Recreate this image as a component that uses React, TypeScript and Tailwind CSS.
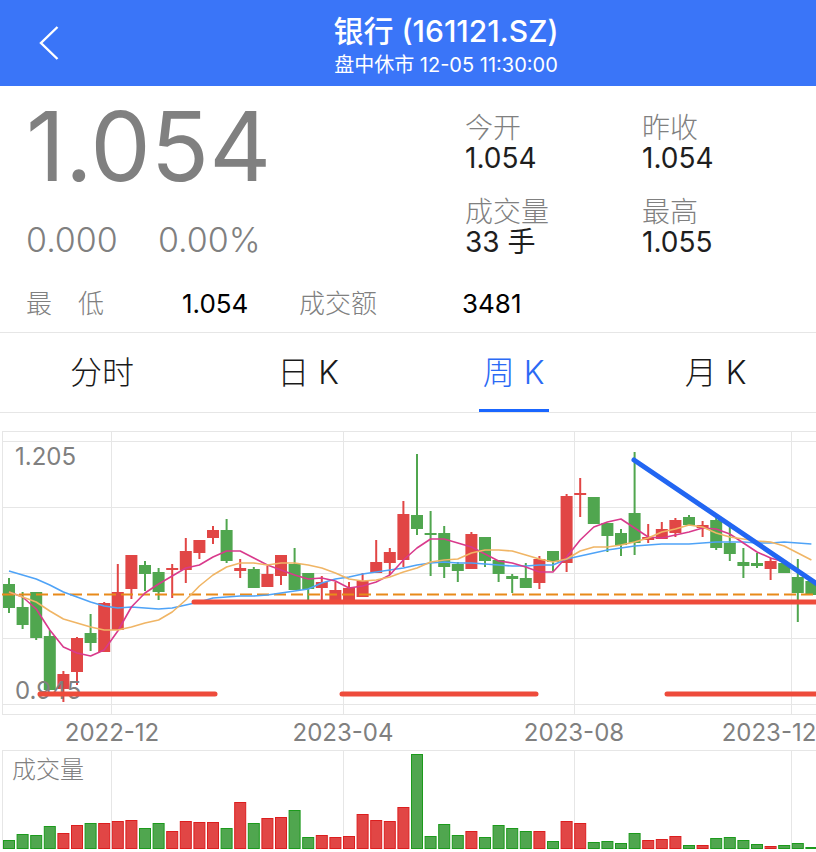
type Candle = {
  up: boolean;
  top: number;
  bottom: number;
  high: number;
  low: number;
  volume: number;
};

const RED = "#e14645";
const GREEN = "#50a64f";
const GRID = "#e6e6e6";
const FIRST_X = 9;
const STEP = 13.6;

// up(1)/down(0), body top, body bottom, high, low, volume
const rows: number[][] = [
  [0, 584, 608, 578, 613, 9],
  [0, 607, 625, 592, 629, 15],
  [0, 592, 638, 592, 640, 14],
  [0, 636, 690, 630, 690, 23],
  [1, 674, 689, 671, 702, 16],
  [1, 638, 672, 637, 685, 24],
  [0, 633, 643, 614, 651, 26],
  [1, 603, 652, 602, 652, 26],
  [1, 592, 630, 564, 630, 28],
  [1, 555, 589, 555, 599, 29],
  [0, 565, 574, 561, 591, 21],
  [0, 572, 592, 568, 600, 26],
  [1, 568, 570, 564, 598, 18],
  [1, 551, 570, 538, 583, 28],
  [1, 540, 553, 540, 559, 27],
  [1, 530, 538, 526, 544, 27],
  [0, 530, 561, 519, 563, 21],
  [1, 568, 571, 559, 578, 47],
  [0, 569, 588, 567, 588, 26],
  [1, 574, 587, 566, 587, 31],
  [1, 555, 576, 555, 585, 32],
  [0, 564, 590, 548, 590, 39],
  [0, 573, 589, 573, 600, 12],
  [1, 582, 588, 576, 600, 14],
  [1, 590, 600, 582, 600, 12],
  [1, 588, 601, 582, 601, 13],
  [1, 581, 597, 573, 597, 35],
  [1, 562, 573, 540, 573, 29],
  [1, 552, 563, 548, 575, 28],
  [1, 514, 560, 501, 567, 42],
  [0, 515, 529, 454, 535, 95],
  [0, 533, 535, 511, 576, 13],
  [0, 533, 567, 526, 578, 25],
  [0, 564, 571, 562, 582, 14],
  [1, 534, 569, 532, 569, 18],
  [0, 537, 561, 537, 567, 12],
  [0, 560, 574, 560, 582, 24],
  [0, 576, 579, 574, 593, 21],
  [0, 578, 588, 563, 588, 18],
  [1, 559, 583, 556, 589, 18],
  [0, 551, 562, 551, 571, 8],
  [1, 496, 563, 494, 572, 28],
  [1, 493, 495, 478, 517, 26],
  [0, 497, 524, 497, 524, 7],
  [0, 523, 536, 523, 552, 8],
  [0, 533, 545, 529, 556, 6],
  [0, 513, 543, 452, 555, 16],
  [1, 537, 540, 524, 543, 9],
  [1, 529, 539, 522, 539, 10],
  [1, 520, 533, 518, 537, 13],
  [0, 517, 525, 515, 525, 4],
  [1, 525, 528, 521, 537, 4],
  [0, 520, 548, 517, 550, 11],
  [0, 543, 554, 527, 561, 12],
  [0, 562, 566, 548, 578, 9],
  [0, 563, 566, 553, 568, 5],
  [1, 561, 569, 558, 580, 3],
  [0, 563, 573, 563, 573, 4],
  [0, 577, 593, 559, 622, 6],
  [0, 581, 595, 581, 595, 2],
];

const candles: Candle[] = rows.map(([up, top, bottom, high, low, volume]) => ({
  up: up === 1,
  top,
  bottom,
  high,
  low,
  volume,
}));

const ma5 = [
  592, 597, 609, 630, 647, 653, 656, 650, 631, 607, 593, 584, 576, 568, 565,
  557, 551, 551, 558, 565, 570, 575, 579, 578, 581, 588, 586, 582, 575, 560,
  548, 539, 539, 543, 547, 554, 561, 563, 567, 572, 572, 557, 540, 527, 522,
  519, 528, 537, 538, 535, 532, 528, 529, 534, 543, 552, 558, 562, 571, 580,
];

const ma10 = [
  592, 597, 602, 611, 619, 623, 627, 630, 630, 627, 623, 620, 612, 600, 586,
  575, 567, 563, 563, 565, 563, 563, 565, 568, 573, 579, 581, 580, 577, 572,
  568, 562, 560, 559, 553, 550, 550, 551, 555, 559, 562, 559, 551, 547, 547,
  545, 542, 538, 532, 529, 525, 527, 533, 537, 539, 541, 542, 546, 553, 560,
];

const ma20 = [
  571, 575, 579, 585, 592, 597, 602, 606, 608, 607, 608, 609, 608, 605, 602,
  598, 597, 596, 596, 595, 593, 591, 589, 583, 579, 577, 574, 572, 570, 568,
  565, 563, 562, 563, 563, 564, 565, 566, 566, 565, 565, 559, 556, 553, 550,
  548, 546, 545, 544, 544, 544, 543, 542, 542, 542, 543, 543, 542, 543, 544,
];

const months = [
  { label: "2022-12", x: 112 },
  { label: "2023-04", x: 343 },
  { label: "2023-08", x: 574 },
  { label: "2023-12", x: 769 },
];

const tabs = ["分时", "日 K", "周 K", "月 K"];

const quotes = [
  { label: "今开", value: "1.054" },
  { label: "昨收", value: "1.054" },
  { label: "成交量", value: "33 手" },
  { label: "最高", value: "1.055" },
];

const xAt = (i: number) => FIRST_X + i * STEP;

const toPoints = (values: number[]) =>
  values.map((y, i) => `${xAt(i).toFixed(1)},${y}`).join(" ");

const Header = () => (
  <header className="flex h-[86px] items-center bg-[#3a75f8] text-white">
    <button type="button" aria-label="返回" className="w-[76px] py-6 pl-[38px]">
      <svg width="22" height="36" viewBox="0 0 22 36" fill="none">
        <path d="M19.5 2 3 18l16.500 16" stroke="white" strokeWidth="2.4" />
      </svg>
    </button>
    <div className="flex-1 pt-2 text-center">
      <h1 className="text-[30px] leading-9 font-medium">银行 (161121.SZ)</h1>
      <p className="text-[20px] leading-8">盘中休市 12-05 11:30:00</p>
    </div>
  </header>
);

const Quote = () => (
  <section className="border-b border-[#e6e6e6] pt-4 pb-2 pl-[26px] text-[#808080]">
    <div className="grid grid-cols-[439fr_351fr]">
      <div>
        <p className="text-[96px] leading-[88px]">1.054</p>
        <p className="flex gap-10 pt-[30px] text-[34px] leading-[40px] font-light">
          <span>0.000</span>
          <span>0.00%</span>
        </p>
      </div>
      <dl className="grid grid-cols-[177fr_174fr] content-start gap-y-6 pt-[11px]">
        {quotes.map((item) => (
          <div key={item.label}>
            <dt className="text-[28px] leading-[30px] font-light">
              {item.label}
            </dt>
            <dd className="text-[28px] leading-[30px] text-[#1e1e1e]">
              {item.value}
            </dd>
          </div>
        ))}
      </dl>
    </div>
    <dl className="grid grid-cols-[156fr_117fr_163fr_354fr] pt-6 text-[26px] leading-[40px]">
      <dt className="font-light">最　低</dt>
      <dd className="text-black">1.054</dd>
      <dt className="font-light">成交额</dt>
      <dd className="text-black">3481</dd>
    </dl>
  </section>
);

const Tabs = () => (
  <nav className="grid h-[80px] grid-cols-[204fr_208fr_203fr_201fr] border-b border-[#e6e6e6]">
    {tabs.map((tab) => (
      <button
        key={tab}
        type="button"
        className={
          tab === "周 K"
            ? "flex flex-col items-center justify-between text-[32px] text-[#2b6af5]"
            : "flex flex-col items-center justify-between text-[32px] text-[#1a1a1a]"
        }
      >
        <span className="pt-4 leading-[48px] font-light">{tab}</span>
        {tab === "周 K" && <span className="h-[3px] w-[70px] bg-[#1a66ff]" />}
      </button>
    ))}
  </nav>
);

const PriceChart = () => (
  <svg viewBox="0 430 816 320" className="block w-full" role="img">
    <g stroke={GRID} strokeWidth="1">
      {[431.5, 441.5, 507.5, 573.5, 638.5, 704.5, 714.5].map((y) => (
        <line key={y} x1="2" x2="816" y1={y} y2={y} />
      ))}
      {[2.5, 111.5, 343.5, 574.5, 791.5].map((x) => (
        <line key={x} x1={x} x2={x} y1="431" y2="714" />
      ))}
    </g>

    {candles.map((c, i) => (
      <g key={i} fill={c.up ? RED : GREEN}>
        <rect x={xAt(i) - 1} y={c.high} width="2" height={c.low - c.high} />
        <rect x={xAt(i) - 6} y={c.top} width="12" height={c.bottom - c.top} />
      </g>
    ))}

    <line
      x1="2"
      x2="816"
      y1="594.5"
      y2="594.5"
      stroke="#e88a1a"
      strokeWidth="2"
      strokeDasharray="12 5"
    />

    <g fill="none" strokeWidth="1.6" strokeLinejoin="round">
      <polyline points={toPoints(ma20)} stroke="#4fa3f7" />
      <polyline points={toPoints(ma5)} stroke="#d93a8c" />
      <polyline points={toPoints(ma10)} stroke="#f0b565" />
    </g>

    <g fill="#808080" fontSize="24">
      <text x="15" y="465">
        1.205
      </text>
      <text x="15" y="699">
        0.945
      </text>
      {months.map((m) => (
        <text key={m.label} x={m.x} y="741" textAnchor="middle">
          {m.label}
        </text>
      ))}
    </g>

    {/* support and trend lines */}
    <g stroke="#ee4b3b" strokeWidth="5" strokeLinecap="round">
      <line x1="194" x2="820" y1="602" y2="602" />
      <line x1="40" x2="215" y1="694" y2="694" />
      <line x1="342" x2="536" y1="694" y2="694" />
      <line x1="667" x2="820" y1="694" y2="694" />
    </g>
    <line
      x1="634"
      y1="460"
      x2="820"
      y2="586"
      stroke="#2266f2"
      strokeWidth="5"
      strokeLinecap="round"
    />
  </svg>
);

const VolumeChart = () => (
  <svg viewBox="0 750 816 102" className="block w-full" role="img">
    <g stroke={GRID} strokeWidth="1">
      <line x1="2" x2="816" y1="750.5" y2="750.5" />
      {[2.5, 111.5, 343.5, 574.5, 791.5].map((x) => (
        <line key={x} x1={x} x2={x} y1="750" y2="849" />
      ))}
    </g>
    <text x="12" y="778" fill="#808080" fontSize="24" fontWeight="300">
      成交量
    </text>
    {candles.map((c, i) => (
      <rect
        key={i}
        x={xAt(i) - 5.5}
        y={849 - c.volume + 0.5}
        width="11"
        height={c.volume - 1}
        fill={c.up ? RED : GREEN}
        stroke={c.up ? "#dc1e1e" : "#1c9a1c"}
        strokeWidth="1"
      />
    ))}
  </svg>
);

const App = () => {
  return (
    <main className="overflow-hidden bg-white font-['Inter','Noto_Sans_CJK_SC',sans-serif]">
      <Header />
      <Quote />
      <Tabs />
      <div className="pt-[17px]">
        <PriceChart />
        <VolumeChart />
      </div>
    </main>
  );
};

export default App;
